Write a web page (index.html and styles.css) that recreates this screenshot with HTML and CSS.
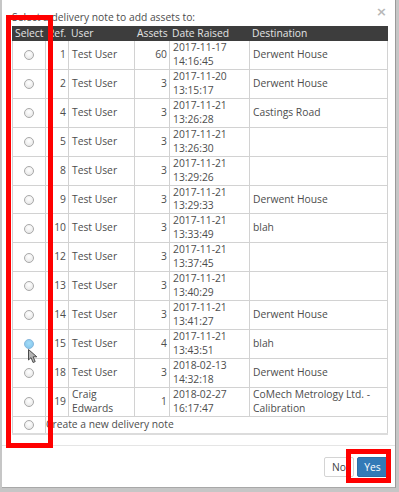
FILE: index.html
```html
<!DOCTYPE html>
<html lang="en">
<head>
<meta charset="utf-8">
<title>Select delivery note</title>
<link rel="stylesheet" href="styles.css">
</head>
<body>
<div class="modal">
  <div class="modal-body">
    <div class="prompt-row">
      <p class="prompt">Select a delivery note to add assets to:</p>
      <span class="close">×</span>
    </div>
    <table class="notes">
      <colgroup>
        <col class="c-sel"><col class="c-ref"><col class="c-user"><col class="c-assets"><col class="c-date"><col class="c-dest">
      </colgroup>
      <thead>
        <tr><th>Select</th><th>Ref.</th><th>User</th><th class="num">Assets</th><th>Date Raised</th><th>Destination</th></tr>
      </thead>
      <tbody>
        <tr><td class="sel"><input type="radio" name="dn"></td><td class="num">1</td><td>Test User</td><td class="num">60</td><td>2017-11-17 14:16:45</td><td>Derwent House</td></tr>
        <tr><td class="sel"><input type="radio" name="dn"></td><td class="num">2</td><td>Test User</td><td class="num">3</td><td>2017-11-20 13:15:17</td><td>Derwent House</td></tr>
        <tr><td class="sel"><input type="radio" name="dn"></td><td class="num">4</td><td>Test User</td><td class="num">3</td><td>2017-11-21 13:26:28</td><td>Castings Road</td></tr>
        <tr><td class="sel"><input type="radio" name="dn"></td><td class="num">5</td><td>Test User</td><td class="num">3</td><td>2017-11-21 13:26:30</td><td></td></tr>
        <tr><td class="sel"><input type="radio" name="dn"></td><td class="num">8</td><td>Test User</td><td class="num">3</td><td>2017-11-21 13:29:26</td><td></td></tr>
        <tr><td class="sel"><input type="radio" name="dn"></td><td class="num">9</td><td>Test User</td><td class="num">3</td><td>2017-11-21 13:29:33</td><td>Derwent House</td></tr>
        <tr><td class="sel"><input type="radio" name="dn"></td><td class="num">10</td><td>Test User</td><td class="num">3</td><td>2017-11-21 13:33:49</td><td>blah</td></tr>
        <tr><td class="sel"><input type="radio" name="dn"></td><td class="num">12</td><td>Test User</td><td class="num">3</td><td>2017-11-21 13:37:45</td><td></td></tr>
        <tr><td class="sel"><input type="radio" name="dn"></td><td class="num">13</td><td>Test User</td><td class="num">3</td><td>2017-11-21 13:40:29</td><td></td></tr>
        <tr><td class="sel"><input type="radio" name="dn"></td><td class="num">14</td><td>Test User</td><td class="num">3</td><td>2017-11-21 13:41:27</td><td>Derwent House</td></tr>
        <tr><td class="sel"><input type="radio" name="dn" checked></td><td class="num">15</td><td>Test User</td><td class="num">4</td><td>2017-11-21 13:43:51</td><td>blah</td></tr>
        <tr><td class="sel"><input type="radio" name="dn"></td><td class="num">18</td><td>Test User</td><td class="num">3</td><td>2018-02-13 14:32:18</td><td>Derwent House</td></tr>
        <tr><td class="sel"><input type="radio" name="dn"></td><td class="num">19</td><td>Craig Edwards</td><td class="num">1</td><td>2018-02-27 16:17:47</td><td>CoMech Metrology Ltd. - Calibration</td></tr>
        <tr class="new-row"><td class="sel"><input type="radio" name="dn"></td><td colspan="5" class="new-label">Create a new delivery note</td></tr>
      </tbody>
    </table>
  </div>
  <div class="modal-footer">
    <button class="btn btn-default">No</button>
    <button class="btn btn-primary">Yes</button>
  </div>
</div>
<div class="mark mark-select"></div>
<div class="mark mark-yes"></div>
<svg class="cursor" width="11" height="15" viewBox="0 0 11 15">
  <path d="M0.5 0.5 L0.5 11 L3 8.6 L5.1 13.5 L7.2 12.6 L5.1 7.8 L8.8 7.8 Z" fill="#b4b4b4" stroke="#4a4a4a" stroke-width="1" stroke-linejoin="round"/>
</svg>
</body>
</html>
```
FILE: styles.css
```css
html, body {
  margin: 0;
  padding: 0;
}
body {
  background: #c6c6c6;
  width: 399px;
  height: 492px;
  overflow: hidden;
  position: relative;
  font-family: "Open Sans", "DejaVu Sans", sans-serif;
  font-size: 10.3px;
  color: #4d4d4d;
}
.modal {
  margin-left: 2px;
  width: 394px;
  height: 488px;
  box-sizing: border-box;
  background: #fff;
  border-right: 1px solid #9a9a9a;
  border-bottom: 1px solid #a8a8a8;
  display: flex;
  flex-direction: column;
}
.modal-body {
  padding: 7px 7px 10px 10px;
  flex: 1;
}
.prompt-row {
  display: flex;
  justify-content: space-between;
  align-items: flex-start;
}
.prompt {
  margin: 3px 0 0 0;
  line-height: 14px;
}
.close {
  font-size: 13px;
  line-height: 10px;
  color: #b8b8b8;
  font-weight: bold;
  margin-right: 1px;
  font-family: "DejaVu Sans", sans-serif;
}
.notes {
  margin-top: 2px;
  width: 375px;
  table-layout: fixed;
  border-collapse: collapse;
  border-bottom: 2px solid #dcdcdc;
}
.c-sel { width: 33px; }
.c-ref { width: 23px; }
.c-user { width: 66px; }
.c-assets { width: 35px; }
.c-date { width: 80px; }
.c-dest { width: 138px; }
.notes th {
  background: #3d3d3d;
  color: #e4e4e4;
  font-weight: normal;
  text-align: left;
  line-height: 13px;
  padding: 0 2px;
  border: 1px solid #3d3d3d;
  border-left-color: #6a6a6a;
  white-space: nowrap;
}
.notes th:first-child {
  border-left-color: #3d3d3d;
}
.notes td {
  border: 1px solid #d2d2d2;
  line-height: 13.95px;
  padding: 0 3px;
  vertical-align: middle;
}
.notes .num {
  text-align: right;
}
.notes td.num {
  padding-right: 2px;
}
.notes td.sel {
  text-align: center;
  padding: 0;
}
.notes input[type="radio"] {
  appearance: none;
  -webkit-appearance: none;
  width: 10px;
  height: 10px;
  margin: 0;
  border-radius: 50%;
  border: 1px solid #a9a9a9;
  background: radial-gradient(circle at 50% 35%, #ffffff 0%, #ebebeb 70%, #dddddd 100%);
  vertical-align: middle;
  display: inline-block;
  box-sizing: border-box;
}
.notes input[type="radio"]:checked {
  background: radial-gradient(circle at 50% 40%, #a6dcf7 0%, #7cc3ec 100%);
  border-color: #8ab8dc;
}
.new-row td {
  height: 16px;
}
.notes td.new-label {
  padding-left: 0;
}
.modal-footer {
  border-top: 1px solid #e5e5e5;
  padding: 11px 7px 10px 0;
  display: flex;
  justify-content: flex-end;
  gap: 3px;
}
.btn {
  font-family: "Open Sans", "DejaVu Sans", sans-serif;
  font-size: 10.3px;
  height: 20px;
  padding: 0;
  border-radius: 2px;
  line-height: 18px;
  margin: 0;
  text-align: center;
}
.btn-default {
  width: 30px;
  background: #fff;
  border: 1px solid #d4d4d4;
  color: #444;
}
.btn-primary {
  width: 31px;
  background: #337ab7;
  border: 1px solid #2e6da4;
  color: #fff;
}
.mark {
  position: absolute;
  border: 5px solid #ff0000;
  box-sizing: border-box;
}
.mark-select {
  left: 6px;
  top: 15px;
  width: 47px;
  height: 433px;
}
.mark-yes {
  left: 346px;
  top: 449px;
  width: 45px;
  height: 34px;
}
.cursor {
  position: absolute;
  left: 28px;
  top: 349px;
}
```
